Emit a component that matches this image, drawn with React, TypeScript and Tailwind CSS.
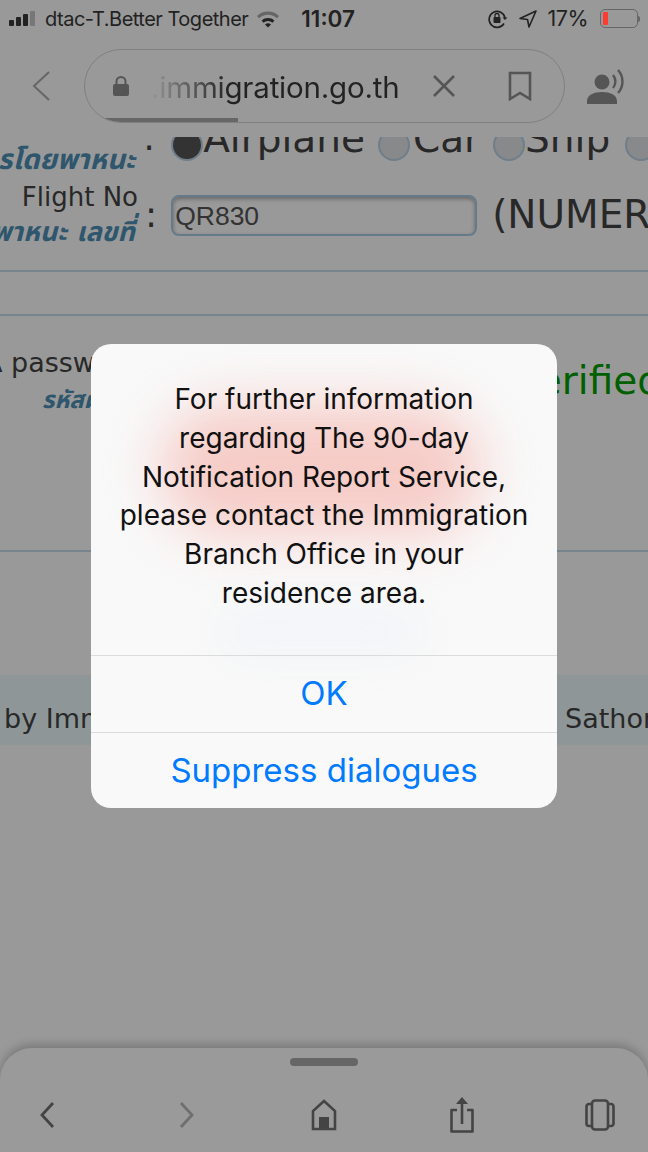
const webFont = "font-['DejaVu_Sans',sans-serif]";
const thai = "font-['DejaVu_Sans','Noto_Sans_Thai','Noto_Sans',sans-serif] italic font-bold text-[#4d8fb5]";

function Radio({ checked = false }: { checked?: boolean }) {
  return (
    <span
      className={`block w-[32px] h-[32px] mb-[1px] shrink-0 rounded-full border-2 border-[#b9d3e6] ${
        checked ? "bg-[#555]" : "bg-[#e2e4e6]"
      }`}
    />
  );
}

function StatusBar() {
  return (
    <div className="relative z-10 h-[37px] flex items-center pl-[9px] pr-[8px] text-[#222] font-['Inter',sans-serif] text-[20px] tracking-[-0.5px]">
      <div className="flex items-end gap-[2px] h-[15px]">
        <span className="w-[5px] h-[6px] bg-[#222] rounded-[1px]" />
        <span className="w-[5px] h-[9px] bg-[#222] rounded-[1px]" />
        <span className="w-[5px] h-[12px] bg-[#222] rounded-[1px]" />
        <span className="w-[5px] h-[15px] bg-[#777] rounded-[1px]" />
      </div>
      <span className="ml-[10px] whitespace-nowrap">dtac-T.Better Together</span>
      <svg width="24" height="18" viewBox="0 0 24 18" className="ml-[8px]">
        <path d="M1 6a16 16 0 0 1 22 0l-2 2.300a13 13 0 0 0-18 0z" fill="#666" />
        <path d="M5.500 10.500a10 10 0 0 1 13 0l-2 2.200a7 7 0 0 0-9 0z" fill="#222" />
        <path d="M9 14.500a4.500 4.500 0 0 1 6 0l-3 3z" fill="#222" />
      </svg>
      <span className="ml-[21px] font-semibold tracking-[0px] text-[22.500px]">11:07</span>
      <div className="ml-auto flex items-center">
        <svg width="22" height="20" viewBox="0 0 22 20" fill="none" stroke="#222" strokeWidth="1.600">
          <path d="M17 14.500A8 8 0 1 1 18 9" />
          <path d="M15.500 8.500 18 11l2.500-2.500" fill="#222" stroke="none" />
          <rect x="6.500" y="8" width="7" height="6" fill="#222" stroke="none" rx="1" />
          <path d="M8 8V6.500a2 2 0 0 1 4 0V8" strokeWidth="1.300" />
        </svg>
        <svg width="20" height="20" viewBox="0 0 20 20" fill="none" stroke="#222" strokeWidth="1.600" className="ml-[9px]" strokeLinejoin="round">
          <path d="M18 2 2 9.500l7.500 1 1.500 7.500z" />
        </svg>
        <span className="ml-[9px] text-[21.500px]">17%</span>
        <div className="ml-[12px] flex items-center">
          <div className="w-[38px] h-[19px] rounded-[5px] border border-[#666] p-[2px]">
            <div className="w-[5px] h-full bg-[#ff3b30] rounded-[1px]" />
          </div>
          <span className="w-[2px] h-[6px] bg-[#666] rounded-r-full" />
        </div>
      </div>
    </div>
  );
}

function AddressBar() {
  return (
    <div className="h-[100px] flex items-start pt-[12px] relative z-10 text-[#555]">
      <div className="w-[84px] h-[74px] flex items-center pl-[30px]">
        <svg width="22" height="32" viewBox="0 0 22 32" fill="none" stroke="#666" strokeWidth="2">
          <path d="M19 2 4 16l15 14" />
        </svg>
      </div>
      <div className="relative w-[481px] h-[74px] rounded-full border border-[#808080] flex items-center overflow-hidden">
        <svg width="16" height="20" viewBox="0 0 16 20" className="ml-[28px] shrink-0" fill="#555">
          <rect x="0" y="8" width="16" height="12" rx="2" />
          <path d="M3.500 9V5.500a4.500 4.500 0 0 1 9 0V9" fill="none" stroke="#555" strokeWidth="2" />
        </svg>
        <span className="ml-[22px] mt-[2px] w-[248px] shrink-0 whitespace-nowrap font-['Inter',sans-serif] text-[29.500px] tracking-[-0.2px] text-[#222] bg-[linear-gradient(90deg,#969696_0%,#555_18%,#222_32%)] bg-clip-text [-webkit-text-fill-color:transparent]">
          .immigration.go.th
        </span>
        <svg width="24" height="24" viewBox="0 0 24 24" className="ml-[33px] shrink-0" stroke="#555" strokeWidth="2.600" fill="none">
          <path d="M2 2l20 20M22 2 2 22" />
        </svg>
        <svg width="24" height="30" viewBox="0 0 24 30" className="ml-[52px] shrink-0" stroke="#555" strokeWidth="2.600" fill="none">
          <path d="M2 2h20v26l-10-6-10 6z" />
        </svg>
        <div className="absolute left-0 bottom-0 w-[153px] h-[4px] bg-[#666]" />
      </div>
      <div className="ml-[22px] mt-[19px]">
        <svg width="40" height="36" viewBox="0 0 40 36" fill="#555">
          <circle cx="15" cy="14" r="7.500" />
          <path d="M0 36v-3c0-6 7-9 15-9s15 3 15 9v3z" />
          <path d="M26 7a10 10 0 0 1 0 13" fill="none" stroke="#555" strokeWidth="2.400" />
          <path d="M31 2a17 17 0 0 1 0 23" fill="none" stroke="#555" strokeWidth="2.400" />
        </svg>
      </div>
    </div>
  );
}

function WebPage() {
  return (
    <div className={`absolute left-0 right-0 top-[137px] h-[911px] overflow-hidden bg-white text-[#444] ${webFont}`}>
      {/* transport row, scrolled up under the address bar */}
      <div className="flex h-[38px] items-start">
        <div className={`w-[135px] mt-[8px] shrink-0 text-[28px] leading-[30px] whitespace-nowrap flex justify-end ${thai}`}>
          รโดยพาหนะ
        </div>
        <span className="ml-[8px] -mt-[17px] text-[36px] leading-[36px]">:</span>
        <div className="ml-[16px] -mt-[21px] flex items-end text-[39px] leading-[46px] whitespace-nowrap">
          <Radio checked />
          <span>Airplane</span>
          <span className="ml-[13px] flex items-end"><Radio /><span className="ml-[3px]">Car</span></span>
          <span className="ml-[13px] flex items-end"><Radio /><span>Ship</span></span>
          <span className="ml-[15px] flex items-end"><Radio /></span>
        </div>
      </div>

      {/* flight number */}
      <div className="flex h-[80px] items-center">
        <div className="w-[138px] shrink-0 flex flex-col items-end">
          <span className="text-[26px] leading-[34px] whitespace-nowrap">Flight No</span>
          <span className={`text-[27px] leading-[36px] whitespace-nowrap pr-[3px] ${thai}`}>พาหนะ เลขที่</span>
        </div>
        <span className="ml-[7px] text-[36px]">:</span>
        <div className="ml-[14px] w-[306px] h-[41px] shrink-0 rounded-[8px] border-2 border-[#a9cde6] bg-white flex items-center pl-[2px] pt-[3px] font-['Liberation_Sans',sans-serif] text-[26.500px] text-[#555] shadow-[inset_0_2px_4px_#0005]">
          QR830
        </div>
        <span className="ml-[15px] text-[39px] whitespace-nowrap">(NUMERIC)</span>
      </div>

      <div className="mt-[15px] h-[2px] bg-[#c4dcec]" />
      <div className="h-[42px]" />
      <div className="h-[2px] bg-[#c4dcec]" />

      {/* password row, mostly behind the dialog */}
      <div className="h-[234px] flex justify-between pt-[30px]">
        <div className="flex flex-col items-start pl-[12px] -ml-[28px]">
          <span className="text-[27px] leading-[34px] whitespace-nowrap">A password</span>
          <span className={`text-[24px] leading-[40px] ml-[58px] whitespace-nowrap ${thai}`}>รหัสผ่าน</span>
        </div>
        <span className="mt-[12px] text-[39px] leading-[46px] text-[#00a000] whitespace-nowrap -mr-[14px]">Verified</span>
      </div>
      <div className="h-[2px] bg-[#c4dcec]" />

      <div className="h-[123px]" />
      {/* footer band */}
      <div className="h-[70px] bg-[#eefafd] flex justify-between text-[27px] pt-[24px] pl-[4px] whitespace-nowrap">
        <span>by Immigration</span>
        <span className="w-[83px] overflow-hidden">Sathorn</span>
      </div>
    </div>
  );
}

function BottomBar() {
  return (
    <div className="relative z-10 mt-auto h-[104px] rounded-t-[32px] bg-[#9a9a9a] shadow-[0_-4px_8px_#0003] flex flex-col items-center">
      <div className="mt-[10px] w-[68px] h-[8px] rounded-full bg-[#666]" />
      <div className="mt-[30px] w-[690px] shrink-0 grid grid-cols-5 justify-items-center items-center">
        <svg width="20" height="30" viewBox="0 0 20 30" fill="none" stroke="#444" strokeWidth="2.800">
          <path d="M15 3 4 15l11 12" />
        </svg>
        <svg width="20" height="30" viewBox="0 0 20 30" fill="none" stroke="#6f6f6f" strokeWidth="2.800">
          <path d="M5 3l11 12L5 27" />
        </svg>
        <svg width="26" height="32" viewBox="0 0 26 32" fill="none" stroke="#444" strokeWidth="2.600">
          <path d="M2 30V12L13 2l11 10v18z" />
          <rect x="8" y="18" width="10" height="12" fill="#444" stroke="none" />
        </svg>
        <svg width="26" height="38" viewBox="0 0 26 38" fill="none" stroke="#444" strokeWidth="2.600">
          <path d="M8 14H2.500v21.500h21V14H18" strokeLinejoin="round" />
          <path d="M13 28V4" />
          <path d="M7 8l6-7 6 7z" fill="#444" stroke="none" />
        </svg>
        <svg width="30" height="32" viewBox="0 0 30 32" fill="none" stroke="#444" strokeWidth="2.600">
          <rect x="7" y="1.500" width="16" height="29" rx="3" />
          <path d="M7 5H4a2.500 2.500 0 0 0-2.500 2.500v17A2.500 2.500 0 0 0 4 27h3M23 5h3a2.500 2.500 0 0 1 2.500 2.500v17A2.500 2.500 0 0 1 26 27h-3" />
        </svg>
      </div>
    </div>
  );
}

function Alert() {
  const lines = [
    "For further information",
    "regarding The 90-day",
    "Notification Report Service,",
    "please contact the Immigration",
    "Branch Office in your",
    "residence area.",
  ];
  return (
    <div className="absolute z-20 left-[91px] top-[344px] w-[466px] h-[464px] rounded-[20px] bg-[#f9f9f9] overflow-hidden font-['Inter',sans-serif] flex flex-col">
      <div className="absolute left-[70px] top-[61px] w-[320px] h-[130px] rounded-full bg-[#f5c0ba] blur-[28px] opacity-80" />
      <div className="absolute left-[130px] top-[265px] w-[200px] h-[45px] rounded-full bg-[#f1f4f8] blur-[20px]" />
      <div className="relative h-[311px] pt-[36px] text-center text-[28px] leading-[38.800px] text-[#111] whitespace-nowrap">
        {lines.map((l) => (
          <div key={l}>{l}</div>
        ))}
      </div>
      <div className="relative h-[77px] border-t border-[#dcdcdc] flex items-center justify-center text-[33px] text-[#007aff]">
        OK
      </div>
      <div className="relative flex-1 border-t border-[#dcdcdc] flex items-center justify-center text-[33px] text-[#007aff] whitespace-nowrap">
        Suppress dialogues
      </div>
    </div>
  );
}

export default function App() {
  return (
    <div className="relative w-[648px] h-[1152px] overflow-hidden bg-white flex flex-col">
      <WebPage />
      {/* dimming scrim over the page */}
      <div className="absolute inset-0 bg-black/40" />
      <StatusBar />
      <AddressBar />
      <BottomBar />
      <Alert />
    </div>
  );
}
